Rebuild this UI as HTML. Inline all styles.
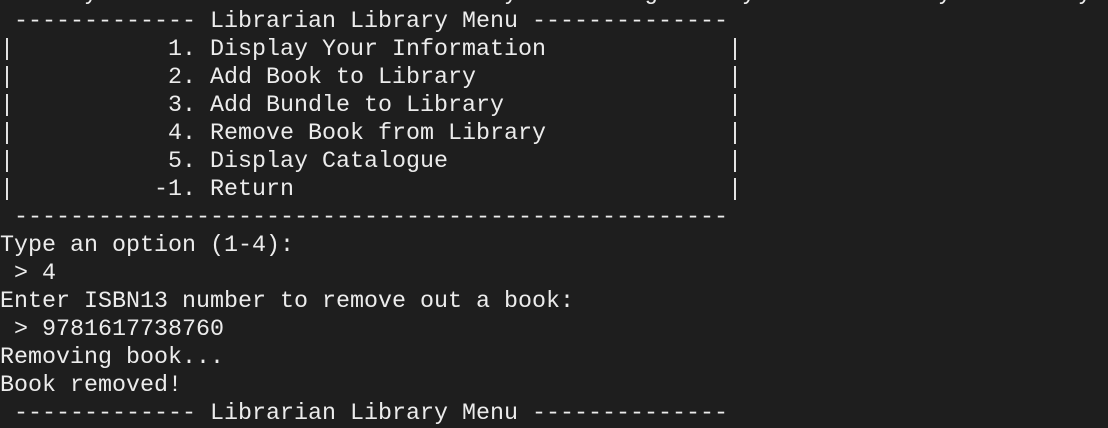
<!DOCTYPE html>
<html><head><meta charset="utf-8"><style>
html,body{margin:0;padding:0;background:#1e1e1e;width:1108px;height:406px;overflow:hidden}
pre{position:absolute;left:0;top:-20px;margin:0;font-family:"Liberation Mono",monospace;font-size:23.33px;line-height:28px;color:#ececec;letter-spacing:0}
</style></head><body>
<pre>Library Patron    Librarian   Library   Catalogue   System   Library   Library
 ------------- Librarian Library Menu --------------
|           1. Display Your Information             |
|           2. Add Book to Library                  |
|           3. Add Bundle to Library                |
|           4. Remove Book from Library             |
|           5. Display Catalogue                    |
|          -1. Return                               |
 ---------------------------------------------------
Type an option (1-4):
 &gt; 4
Enter ISBN13 number to remove out a book:
 &gt; 9781617738760
Removing book...
Book removed!
 ------------- Librarian Library Menu --------------</pre>
</body></html>
